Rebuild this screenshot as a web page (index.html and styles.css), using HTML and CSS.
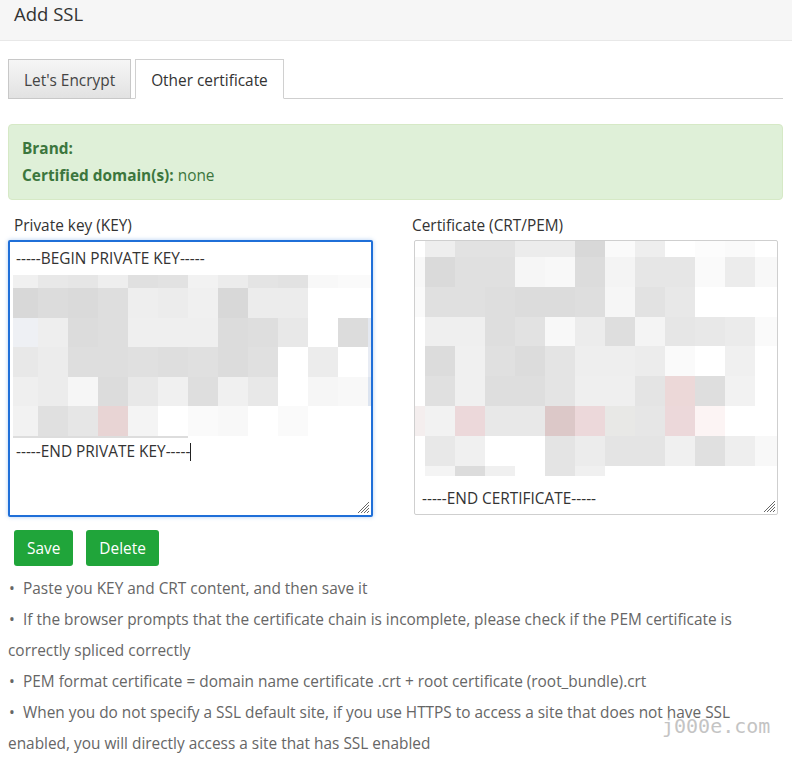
FILE: index.html
```html
<!DOCTYPE html>
<html>
<head>
<meta charset="utf-8">
<link rel="stylesheet" href="styles.css">
</head>
<body>
<div class="header">Add SSL</div>
<div class="content">
  <div class="tabs">
    <div class="tab">Let's Encrypt</div>
    <div class="tab active">Other certificate</div>
  </div>
  <div class="alert">
    <div class="alert-line"><b>Brand:</b></div>
    <div class="alert-line"><b>Certified domain(s):</b> none</div>
  </div>
  <div class="fields">
    <div class="field">
      <div class="label">Private key (KEY)</div>
      <div class="ta ta-focus">
        <div class="ta-line">-----BEGIN PRIVATE KEY-----</div>
        <svg class="mosaic mosaic-left" width="359" height="163" viewBox="0 0 359 163" shape-rendering="crispEdges">
          <g>
            <rect x="-5" y="0" width="30" height="13" fill="#f0f0f0"/><rect x="25" y="0" width="30" height="13" fill="#e8e8e8"/><rect x="55" y="0" width="30" height="13" fill="#e6e6e6"/><rect x="85" y="0" width="30" height="13" fill="#eeeeee"/><rect x="115" y="0" width="30" height="13" fill="#e0e0e0"/><rect x="145" y="0" width="30" height="13" fill="#e2e2e2"/><rect x="175" y="0" width="30" height="13" fill="#f2f2f2"/><rect x="205" y="0" width="30" height="13" fill="#ececec"/><rect x="235" y="0" width="30" height="13" fill="#e4e4e4"/><rect x="265" y="0" width="30" height="13" fill="#e2e2e2"/><rect x="295" y="0" width="30" height="13" fill="#f8f8f8"/><rect x="325" y="0" width="34" height="13" fill="#fafafa"/>
            <rect x="-5" y="13" width="30" height="30" fill="#d8d8d8"/><rect x="25" y="13" width="30" height="30" fill="#dcdcdc"/><rect x="55" y="13" width="30" height="30" fill="#dadada"/><rect x="85" y="13" width="30" height="30" fill="#dedede"/><rect x="115" y="13" width="30" height="30" fill="#eeeeee"/><rect x="145" y="13" width="30" height="30" fill="#ececec"/><rect x="175" y="13" width="30" height="30" fill="#f0f0f0"/><rect x="205" y="13" width="30" height="30" fill="#d8d8d8"/><rect x="235" y="13" width="30" height="30" fill="#ececec"/><rect x="265" y="13" width="30" height="30" fill="#ececec"/>
            <rect x="-5" y="43" width="30" height="29" fill="#eef0f4"/><rect x="25" y="43" width="30" height="29" fill="#eeeeee"/><rect x="55" y="43" width="30" height="29" fill="#dcdcdc"/><rect x="85" y="43" width="30" height="29" fill="#dedede"/><rect x="115" y="43" width="30" height="29" fill="#efefef"/><rect x="145" y="43" width="30" height="29" fill="#efefef"/><rect x="175" y="43" width="30" height="29" fill="#efefef"/><rect x="205" y="43" width="30" height="29" fill="#dcdcdc"/><rect x="235" y="43" width="30" height="29" fill="#dedede"/><rect x="265" y="43" width="30" height="29" fill="#e8e8e8"/><rect x="325" y="43" width="30" height="29" fill="#dcdcdc"/><rect x="355" y="43" width="4" height="29" fill="#e4e8f0"/>
            <rect x="-5" y="72" width="30" height="30" fill="#e8e8e8"/><rect x="25" y="72" width="30" height="30" fill="#ececec"/><rect x="55" y="72" width="30" height="30" fill="#dedede"/><rect x="85" y="72" width="30" height="30" fill="#dedede"/><rect x="115" y="72" width="30" height="30" fill="#e0e0e0"/><rect x="145" y="72" width="30" height="30" fill="#dedede"/><rect x="175" y="72" width="30" height="30" fill="#e0e0e0"/><rect x="205" y="72" width="30" height="30" fill="#dcdcdc"/><rect x="235" y="72" width="30" height="30" fill="#e0e0e0"/><rect x="295" y="72" width="30" height="30" fill="#ececec"/><rect x="355" y="72" width="4" height="30" fill="#e8ecf4"/>
            <rect x="-5" y="102" width="30" height="29" fill="#efefef"/><rect x="25" y="102" width="30" height="29" fill="#ececec"/><rect x="55" y="102" width="30" height="29" fill="#f6f6f6"/><rect x="85" y="102" width="30" height="29" fill="#dcdcdc"/><rect x="115" y="102" width="30" height="29" fill="#e8e8e8"/><rect x="145" y="102" width="30" height="29" fill="#f0f0f0"/><rect x="175" y="102" width="30" height="29" fill="#dedede"/><rect x="205" y="102" width="30" height="29" fill="#f0f0f0"/><rect x="235" y="102" width="30" height="29" fill="#e8e8e8"/><rect x="295" y="102" width="30" height="29" fill="#f6f6f6"/><rect x="325" y="102" width="30" height="29" fill="#f8f8f8"/><rect x="355" y="102" width="4" height="29" fill="#dce4f0"/>
            <rect x="-5" y="131" width="30" height="30" fill="#f2f2f2"/><rect x="25" y="131" width="30" height="30" fill="#e0e0e0"/><rect x="55" y="131" width="30" height="30" fill="#e6e6e6"/><rect x="85" y="131" width="30" height="30" fill="#e8d4d4"/><rect x="115" y="131" width="30" height="30" fill="#f4f4f4"/><rect x="175" y="131" width="30" height="30" fill="#fafafa"/><rect x="205" y="131" width="30" height="30" fill="#f8f8f8"/><rect x="265" y="131" width="30" height="30" fill="#fafafa"/>
            <rect x="0" y="161" width="175" height="2" fill="#dddddd"/>
          </g>
        </svg>
        <div class="ta-line ta-end">-----END PRIVATE KEY-----<span class="caret"></span></div>
        <svg class="grip" width="14" height="14" viewBox="0 0 14 14"><path d="M13 2 L2 13 M13 5 L5 13 M13 8 L8 13 M13 11 L11 13" stroke="#666" stroke-width="1" fill="none"/></svg>
      </div>
    </div>
    <div class="field">
      <div class="label label-right">Certificate (CRT/PEM)</div>
      <div class="ta ta-right">
        <svg class="mosaic mosaic-right" width="362" height="235" viewBox="0 0 362 235" shape-rendering="crispEdges">
          <g>
            <rect x="10" y="0" width="30" height="16" fill="#eeeeee"/><rect x="40" y="0" width="30" height="16" fill="#e2e2e2"/><rect x="70" y="0" width="30" height="16" fill="#e2e2e2"/><rect x="100" y="0" width="30" height="16" fill="#ececec"/><rect x="130" y="0" width="30" height="16" fill="#ececec"/><rect x="160" y="0" width="30" height="16" fill="#d8d8d8"/><rect x="190" y="0" width="30" height="16" fill="#fafafa"/><rect x="220" y="0" width="30" height="16" fill="#eeeeee"/><rect x="280" y="0" width="30" height="16" fill="#fcfcfc"/><rect x="310" y="0" width="30" height="16" fill="#fafafa"/>
            <rect x="0" y="16" width="10" height="30" fill="#f8f8f8"/><rect x="10" y="16" width="30" height="30" fill="#dadada"/><rect x="40" y="16" width="30" height="30" fill="#e0e0e0"/><rect x="70" y="16" width="30" height="30" fill="#e0e0e0"/><rect x="100" y="16" width="30" height="30" fill="#f6f6f6"/><rect x="130" y="16" width="30" height="30" fill="#f8f8f8"/><rect x="160" y="16" width="30" height="30" fill="#dcdcdc"/><rect x="190" y="16" width="30" height="30" fill="#f4f4f4"/><rect x="220" y="16" width="30" height="30" fill="#e6e6e6"/><rect x="250" y="16" width="30" height="30" fill="#e6e6e6"/><rect x="280" y="16" width="30" height="30" fill="#fafafa"/><rect x="310" y="16" width="30" height="30" fill="#ececec"/><rect x="340" y="16" width="22" height="30" fill="#f8f8f8"/>
            <rect x="0" y="46" width="10" height="30" fill="#fafafa"/><rect x="10" y="46" width="30" height="30" fill="#e0e0e0"/><rect x="40" y="46" width="30" height="30" fill="#e0e0e0"/><rect x="70" y="46" width="30" height="30" fill="#dedede"/><rect x="100" y="46" width="30" height="30" fill="#dcdcdc"/><rect x="130" y="46" width="30" height="30" fill="#dcdcdc"/><rect x="160" y="46" width="30" height="30" fill="#dedede"/><rect x="190" y="46" width="30" height="30" fill="#f6f6f6"/><rect x="220" y="46" width="30" height="30" fill="#e2e2e2"/><rect x="250" y="46" width="30" height="30" fill="#e8e8e8"/>
            <rect x="10" y="76" width="30" height="29" fill="#efefef"/><rect x="40" y="76" width="30" height="29" fill="#efefef"/><rect x="70" y="76" width="30" height="29" fill="#dedede"/><rect x="100" y="76" width="30" height="29" fill="#e2e2e2"/><rect x="130" y="76" width="30" height="29" fill="#f8f8f8"/><rect x="160" y="76" width="30" height="29" fill="#ececec"/><rect x="190" y="76" width="30" height="29" fill="#dedede"/><rect x="220" y="76" width="30" height="29" fill="#f4f4f4"/><rect x="250" y="76" width="30" height="29" fill="#e6e6e6"/><rect x="280" y="76" width="30" height="29" fill="#e8e8e8"/><rect x="310" y="76" width="30" height="29" fill="#ebebeb"/><rect x="340" y="76" width="22" height="29" fill="#fafafa"/>
            <rect x="10" y="105" width="30" height="30" fill="#dcdcdc"/><rect x="40" y="105" width="30" height="30" fill="#f0f0f0"/><rect x="70" y="105" width="30" height="30" fill="#e0e0e0"/><rect x="100" y="105" width="30" height="30" fill="#dcdcdc"/><rect x="130" y="105" width="30" height="30" fill="#e4e4e4"/><rect x="160" y="105" width="30" height="30" fill="#eeeeee"/><rect x="190" y="105" width="30" height="30" fill="#eeeeee"/><rect x="220" y="105" width="30" height="30" fill="#ececec"/><rect x="250" y="105" width="30" height="30" fill="#fafafa"/><rect x="310" y="105" width="30" height="30" fill="#f0f0f0"/>
            <rect x="10" y="135" width="30" height="30" fill="#e0e0e0"/><rect x="40" y="135" width="30" height="30" fill="#f0f0f0"/><rect x="70" y="135" width="30" height="30" fill="#dedede"/><rect x="100" y="135" width="30" height="30" fill="#dedede"/><rect x="130" y="135" width="30" height="30" fill="#e4e4e4"/><rect x="160" y="135" width="30" height="30" fill="#efefef"/><rect x="190" y="135" width="30" height="30" fill="#efefef"/><rect x="220" y="135" width="30" height="30" fill="#e4e4e4"/><rect x="250" y="135" width="30" height="30" fill="#ecd8d8"/><rect x="280" y="135" width="30" height="30" fill="#dedede"/><rect x="310" y="135" width="30" height="30" fill="#f2f2f2"/>
            <rect x="0" y="165" width="10" height="30" fill="#f4eeee"/><rect x="10" y="165" width="30" height="30" fill="#f2f2f2"/><rect x="40" y="165" width="30" height="30" fill="#ecd8da"/><rect x="70" y="165" width="30" height="30" fill="#e8e8e8"/><rect x="100" y="165" width="30" height="30" fill="#e8e8e8"/><rect x="130" y="165" width="30" height="30" fill="#dcc8c8"/><rect x="160" y="165" width="30" height="30" fill="#ecd8da"/><rect x="190" y="165" width="30" height="30" fill="#e8e8e6"/><rect x="220" y="165" width="30" height="30" fill="#e6e6e6"/><rect x="250" y="165" width="30" height="30" fill="#ecd8da"/><rect x="280" y="165" width="30" height="30" fill="#fcf4f4"/>
            <rect x="10" y="195" width="30" height="30" fill="#e8e8e8"/><rect x="40" y="195" width="30" height="30" fill="#f0f0f0"/><rect x="130" y="195" width="30" height="30" fill="#e4e4e4"/><rect x="160" y="195" width="30" height="30" fill="#ececec"/><rect x="190" y="195" width="30" height="30" fill="#e4e4e4"/><rect x="220" y="195" width="30" height="30" fill="#e4e4e4"/><rect x="250" y="195" width="30" height="30" fill="#f0f0f0"/><rect x="280" y="195" width="30" height="30" fill="#e0e0e0"/><rect x="310" y="195" width="30" height="30" fill="#eeeeee"/><rect x="340" y="195" width="22" height="30" fill="#f8f8f8"/>
            <rect x="10" y="225" width="30" height="10" fill="#f4f4f4"/><rect x="40" y="225" width="30" height="10" fill="#dcdcdc"/><rect x="70" y="225" width="30" height="10" fill="#f0f0f0"/><rect x="130" y="225" width="30" height="10" fill="#e4e4e4"/><rect x="160" y="225" width="30" height="10" fill="#f0f0f0"/>
          </g>
        </svg>
        <div class="ta-line ta-end-right">-----END CERTIFICATE-----</div>
        <svg class="grip" width="14" height="14" viewBox="0 0 14 14"><path d="M13 2 L2 13 M13 5 L5 13 M13 8 L8 13 M13 11 L11 13" stroke="#666" stroke-width="1" fill="none"/></svg>
      </div>
    </div>
  </div>
  <div class="actions">
    <button class="btn">Save</button>
    <button class="btn">Delete</button>
  </div>
  <ul class="tips">
    <li>Paste you KEY and CRT content, and then save it</li>
    <li>If the browser prompts that the certificate chain is incomplete, please check if the PEM certificate is correctly spliced correctly</li>
    <li>PEM format certificate = domain name certificate .crt + root certificate (root_bundle).crt</li>
    <li>When you do not specify a SSL default site, if you use HTTPS to access a site that does not have SSL enabled, you will directly access a site that has SSL enabled</li>
  </ul>
</div>
<div class="watermark">j000e.com</div>
</body>
</html>
```
FILE: styles.css
```css
* { box-sizing: border-box; }
html, body { margin: 0; padding: 0; background: #fff; }
body {
  font-family: "Open Sans", "Noto Sans", sans-serif;
  font-size: 15.4px;
  color: #333;
  position: relative;
  width: 792px;
  height: 758px;
  overflow: hidden;
}
.header {
  height: 41px;
  background: #f6f6f6;
  border-bottom: 1px solid #e8e8e8;
  padding: 0 14px;
  font-size: 18.5px;
  line-height: 28px;
  color: #333;
}
.content {
  padding: 0 9px 0 8px;
}
.tabs {
  display: flex;
  gap: 4px;
  margin-top: 18px;
  border-bottom: 1px solid #cfcfcf;
  height: 40px;
}
.tab {
  height: 40px;
  line-height: 41px;
  padding: 0 15px;
  border: 1px solid #c8c8c8;
  background: linear-gradient(#f6f6f6, #e2e2e2);
  color: #444;
}
.tab.active {
  background: #fff;
  border-color: #d0d0d0;
  border-bottom-color: #fff;
  color: #333;
}
.alert {
  margin-top: 25px;
  background: #dff0d8;
  border: 1px solid #d6e9c6;
  border-radius: 4px;
  padding: 10px 13px;
  color: #3c763d;
}
.alert-line { line-height: 27px; }
.alert b { font-weight: 700; }
.fields {
  display: grid;
  grid-template-columns: 366px 1fr;
  column-gap: 32px;
  margin-top: 16px;
}
.label {
  line-height: 20px;
  padding-left: 6px;
  margin-bottom: 4px;
}
.label-right { padding-left: 6px; }
.ta {
  position: relative;
  background: #fff;
  color: #333;
  overflow: hidden;
}
.ta-focus {
  width: 365px;
  height: 277px;
  border: 2px solid #1f6fd8;
  border-radius: 2px;
  box-shadow: 0 0 4px rgba(31, 111, 216, 0.35);
  padding: 7px 6px 0 6px;
}
.ta-right {
  margin-top: 1px;
  margin-left: 8px;
  width: 364px;
  height: 275px;
  border: 1px solid #cfcfcf;
  border-radius: 2px;
  padding: 0 7px;
}
.ta-line {
  line-height: 20px;
  white-space: nowrap;
}
.mosaic { display: block; }
.mosaic-left { margin: 6px 0 0 -3px; }
.mosaic-right { margin-left: -7px; }
.ta-end { margin-top: 4px; }
.ta-end-right { margin-top: 13px; }
.caret {
  display: inline-block;
  width: 1px;
  height: 18px;
  background: #222;
  vertical-align: -4px;
}
.grip {
  position: absolute;
  right: 1px;
  bottom: 1px;
}
.actions {
  display: flex;
  gap: 13px;
  margin: 13px 0 0 6px;
}
.btn {
  height: 36px;
  padding: 0 13px;
  background: #20a53a;
  color: #fff;
  border: none;
  border-radius: 3px;
  font-family: inherit;
  font-size: 15.4px;
}
.tips {
  list-style: none;
  margin: 7px 0 0 0;
  padding: 0;
  color: #666;
  line-height: 31px;
}
.tips li::before {
  content: "\2022";
  display: inline-block;
  width: 14px;
  padding-left: 1px;
  color: #666;
}
.watermark {
  position: absolute;
  left: 662px;
  top: 714px;
  font-family: "DejaVu Sans Mono", monospace;
  font-size: 20px;
  color: #c4c4c4;
}
```
